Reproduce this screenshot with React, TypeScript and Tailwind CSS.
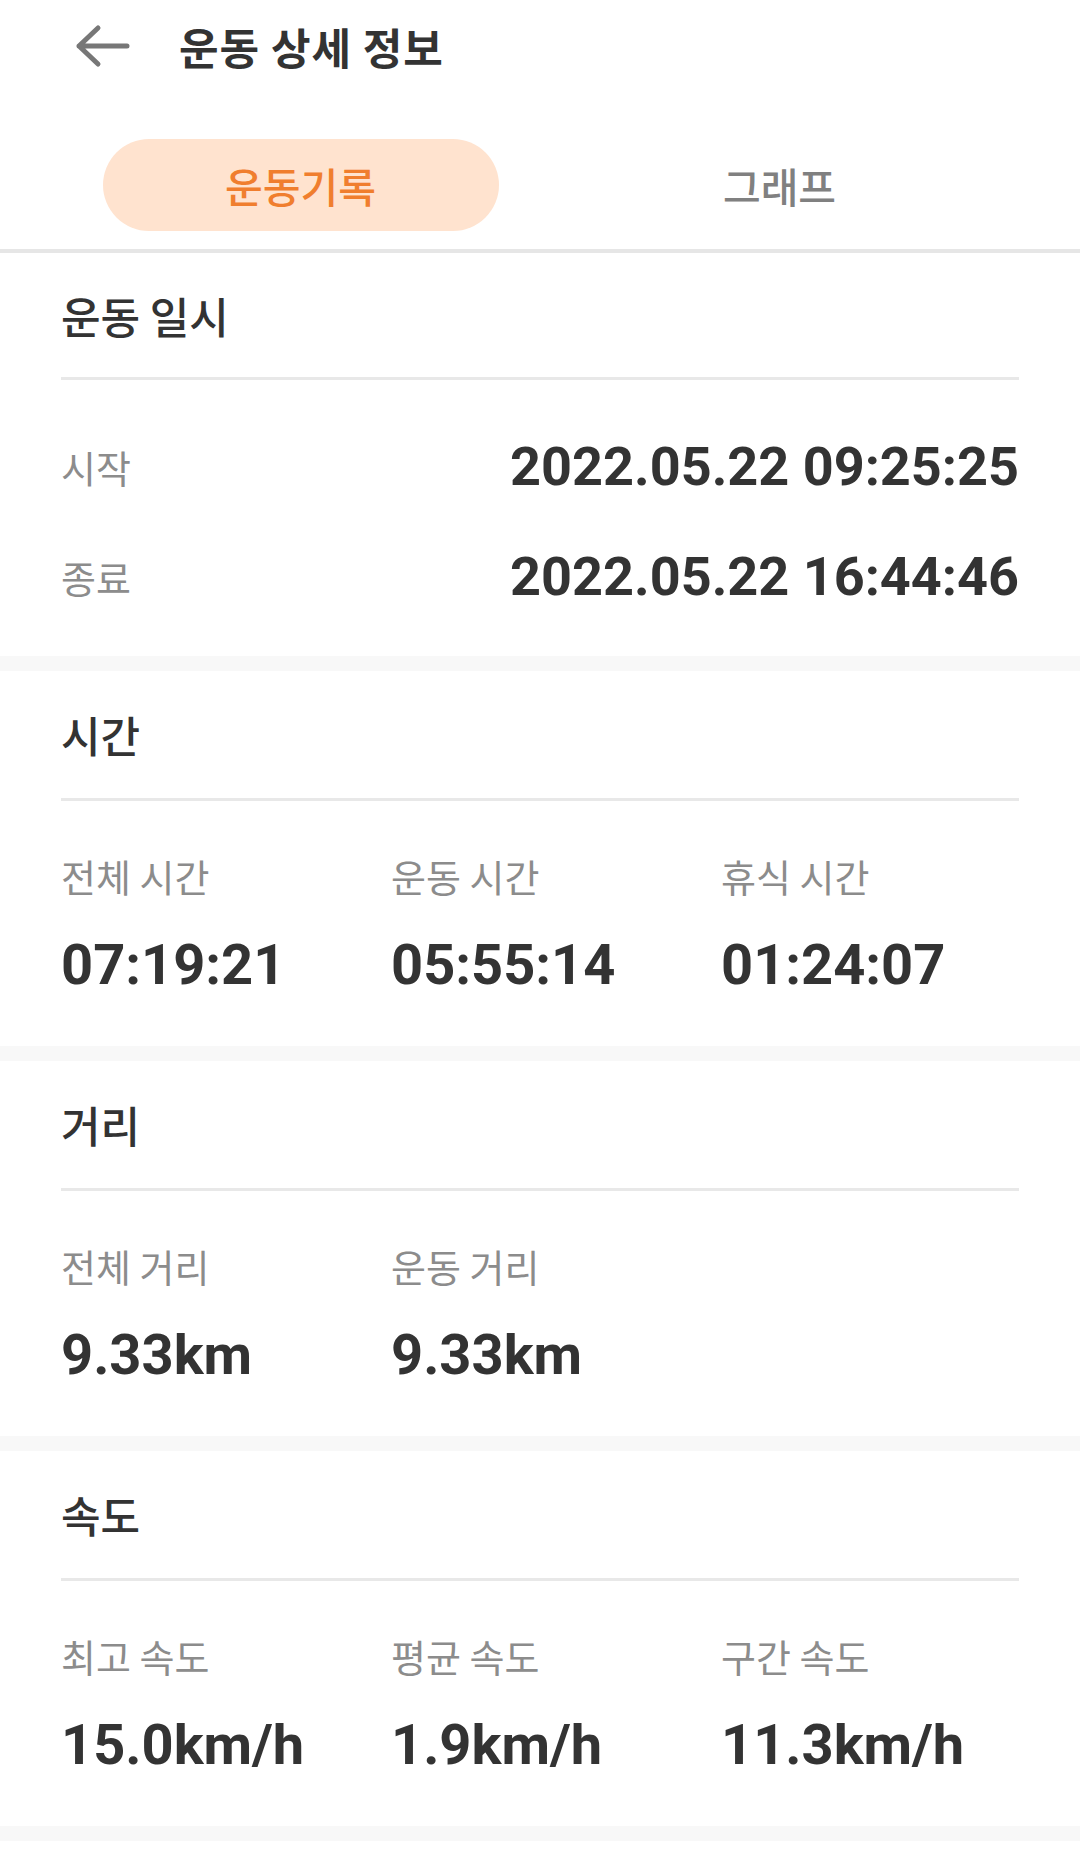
import React from "react";

const KR = { fontFamily: '"Noto Sans CJK KR", "Noto Sans", sans-serif' };
const NUM = { fontFamily: 'Roboto, "Noto Sans CJK KR", sans-serif' };

function SectionHeader({ title }: { title: string }) {
  return (
    <>
      <div className="flex items-center h-[127px]">
        <span className="text-[43px] font-medium text-[#333333] leading-none" style={KR}>
          {title}
        </span>
      </div>
      <div className="h-[3px] bg-[#E8E8E8]" />
    </>
  );
}

function StatSection({ title, items }: { title: string; items: { label: string; value: string }[] }) {
  return (
    <section className="bg-white px-[61px]">
      <SectionHeader title={title} />
      <div className="flex pt-[51px] pb-[49px]">
        {items.map((it, i) => (
          <div
            key={it.label}
            className={i < 2 ? "w-[330px] shrink-0 flex flex-col" : "flex-1 min-w-0 flex flex-col"}
          >
            <div className="h-[48px] flex items-center text-[38px] text-[#8C8C8C] leading-none whitespace-nowrap" style={KR}>
              {it.label}
            </div>
            <div className="h-[64px] mt-[33px] flex items-center text-[56px] font-bold text-[#333333] leading-none whitespace-nowrap" style={NUM}>
              {it.value}
            </div>
          </div>
        ))}
      </div>
    </section>
  );
}

function Band() {
  return <div className="h-[15px] bg-[#F8F8F8]" />;
}

export default function App() {
  return (
    <div className="w-[1080px] h-[1849px] bg-white overflow-hidden" style={KR}>
      {/* Header */}
      <div className="h-[92px] flex items-center pl-[74px]">
        <svg width="56" height="44" viewBox="0 0 56 44" fill="none" className="shrink-0">
          <path d="M53 22H5M24 4L5 22L24 40" stroke="#777777" strokeWidth="5" strokeLinecap="round" strokeLinejoin="round" />
        </svg>
        <h1 className="ml-[49px] text-[43px] font-bold text-[#333333] leading-none tracking-[1px]" style={KR}>
          운동 상세 정보
        </h1>
      </div>

      {/* Tabs */}
      <div className="px-[61px] pt-[47px] pb-[18px] grid grid-cols-2">
        <div className="flex justify-center">
          <div className="w-[396px] h-[92px] rounded-full bg-[#FFE3CF] flex items-center justify-center">
            <span className="text-[41px] font-medium text-[#F07E2E] leading-none" style={KR}>
              운동기록
            </span>
          </div>
        </div>
        <div className="flex justify-center items-center h-[92px]">
          <span className="text-[41px] font-medium text-[#808080] leading-none" style={KR}>
            그래프
          </span>
        </div>
      </div>
      <div className="h-[4px] bg-[#E6E6E6]" />

      {/* Section 1 */}
      <section className="bg-white px-[61px]">
        <div className="flex items-center h-[124px]">
          <span className="text-[43px] font-medium text-[#333333] leading-none" style={KR}>
            운동 일시
          </span>
        </div>
        <div className="h-[3px] bg-[#E8E8E8]" />
        <div className="pt-[32px] pb-[24px]">
          <div className="h-[110px] flex items-center justify-between">
            <span className="text-[38px] text-[#8C8C8C] leading-none" style={KR}>시작</span>
            <span className="text-[54px] font-bold text-[#333333] leading-none" style={NUM}>2022.05.22 09:25:25</span>
          </div>
          <div className="h-[110px] flex items-center justify-between">
            <span className="text-[38px] text-[#8C8C8C] leading-none" style={KR}>종료</span>
            <span className="text-[54px] font-bold text-[#333333] leading-none" style={NUM}>2022.05.22 16:44:46</span>
          </div>
        </div>
      </section>
      <Band />

      <StatSection
        title="시간"
        items={[
          { label: "전체 시간", value: "07:19:21" },
          { label: "운동 시간", value: "05:55:14" },
          { label: "휴식 시간", value: "01:24:07" },
        ]}
      />
      <Band />

      <StatSection
        title="거리"
        items={[
          { label: "전체 거리", value: "9.33km" },
          { label: "운동 거리", value: "9.33km" },
        ]}
      />
      <Band />

      <StatSection
        title="속도"
        items={[
          { label: "최고 속도", value: "15.0km/h" },
          { label: "평균 속도", value: "1.9km/h" },
          { label: "구간 속도", value: "11.3km/h" },
        ]}
      />
      <Band />
    </div>
  );
}
